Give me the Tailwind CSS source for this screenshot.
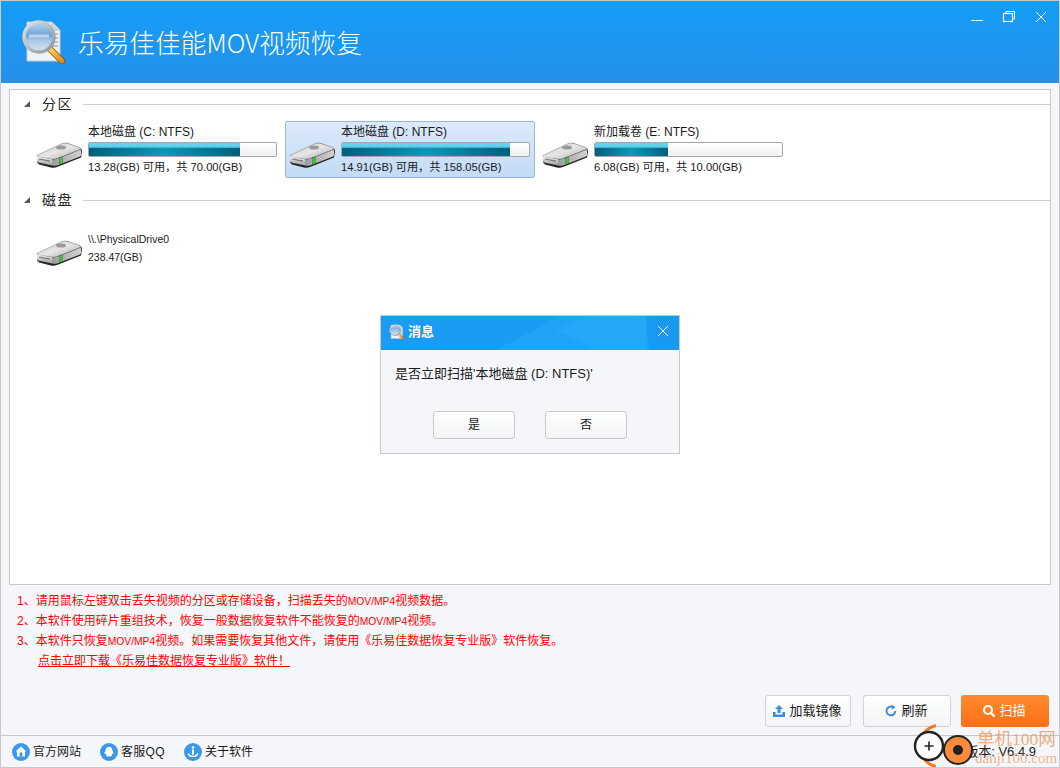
<!DOCTYPE html>
<html>
  <head>
    <meta charset="utf-8" />
    <title>乐易佳佳能MOV视频恢复</title>
    <script src="https://cdn.jsdelivr.net/npm/@tailwindcss/browser@4"></script>
  </head>

  <body>
    <!-- Shared icons -->
    <svg class="absolute h-0 w-0" xmlns="http://www.w3.org/2000/svg">
      <defs>
        <linearGradient id="hddTop" x1="0" y1="0" x2="1" y2="1">
          <stop offset="0" stop-color="#c9c9c9" />
          <stop offset="0.5" stop-color="#e6e6e6" />
          <stop offset="1" stop-color="#a8a8a8" />
        </linearGradient>
        <linearGradient id="hddFront" x1="0" y1="0" x2="0" y2="1">
          <stop offset="0" stop-color="#f4f4f4" />
          <stop offset="1" stop-color="#9a9a9a" />
        </linearGradient>
        <linearGradient id="hddSide" x1="0" y1="0" x2="1" y2="0">
          <stop offset="0" stop-color="#9c9c9c" />
          <stop offset="1" stop-color="#d2d2d2" />
        </linearGradient>
        <linearGradient id="glass" x1="0" y1="0" x2="0" y2="1">
          <stop offset="0" stop-color="#bcd9f5" />
          <stop offset="0.45" stop-color="#6f9fd6" />
          <stop offset="0.6" stop-color="#a9c6e4" />
          <stop offset="1" stop-color="#d5e6f7" />
        </linearGradient>
        <linearGradient id="handle" x1="0" y1="0" x2="1" y2="1">
          <stop offset="0" stop-color="#ffd76a" />
          <stop offset="1" stop-color="#e28a12" />
        </linearGradient>
        <linearGradient id="ring" x1="0" y1="0" x2="1" y2="1">
          <stop offset="0" stop-color="#e4e4e4" />
          <stop offset="1" stop-color="#8d9296" />
        </linearGradient>
      </defs>
      <symbol id="hdd" viewBox="0 0 46 26">
        <path d="M1 15 L27 2 Q29 1 32 1.5 L44 6 Q46 7 46 9 L45 15.5 L21 25 Q18 26 15 25.4 L3 22.4 Q1 21.6 1 19 Z" fill="#222" />
        <path d="M1 13.4 L26 1.6 Q29 0.4 32 1.4 L44 5.6 Q45.6 6.4 44 7.6 L21 16.6 Q18 17.6 15 17 L2 15 Q0.4 14.4 1 13.4 Z" fill="url(#hddTop)" stroke="#777" stroke-width="0.5" />
        <ellipse cx="25" cy="5.4" rx="5" ry="2" fill="#9a9a9a" />
        <path d="M1 14.4 L16 17.2 L16 23.6 L3 20.8 Q1 20.2 1 18.4 Z" fill="url(#hddFront)" />
        <path d="M16 17.2 Q19 17.8 22 16.6 L45 7.4 L45 13 Q45 14 44 14.4 L21 23.4 Q18 24.2 16 23.6 Z" fill="url(#hddSide)" />
        <rect x="23.6" y="15.6" width="2.6" height="6.4" fill="#3fc83f" stroke="#176b17" stroke-width="0.4" />
        <path d="M3 17 L14 19.2" stroke="#777" stroke-width="1.2" />
      </symbol>
      <symbol id="logo" viewBox="0 0 46 46">
        <path d="M6 3 H31 L39 11 V42 H6 Z" fill="#eef1f6" stroke="#c3cbd6" />
        <path d="M31 3 V11 H39" fill="#cfd6e0" stroke="#b3bcc9" />
        <path d="M30 15 H37 M30 19 H37 M30 23 H37 M30 27 H37" stroke="#7b8794" />
        <path d="M28 29 L41 42" stroke="#8a5a10" stroke-width="6.4" stroke-linecap="round" />
        <path d="M28 29 L41 42" stroke="url(#handle)" stroke-width="4.6" stroke-linecap="round" />
        <circle cx="18" cy="18" r="15" fill="url(#glass)" stroke="url(#ring)" stroke-width="3.4" />
        <path d="M8 17 H28" stroke="#dbe8f5" stroke-width="3" opacity="0.7" />
      </symbol>
    </svg>

    <div class="relative flex h-[768px] w-[1060px] flex-col overflow-hidden border border-[#c8c9cc] bg-[#f5f6f9] text-[12px] text-[#1a1a1a]"
      style='font-family: "Liberation Sans", "Noto Sans CJK SC", sans-serif;'>

      <!-- Title bar -->
      <header class="relative flex h-[82px] shrink-0 items-center bg-gradient-to-b from-[#109ef7] to-[#2590ea] pl-[20px] text-white">
        <svg class="mr-[11px] h-[46px] w-[46px]"><use href="#logo" /></svg>
        <h1 class="text-[25.7px] leading-none font-light" style='font-family: "Noto Sans CJK SC", sans-serif;'>乐易佳佳能MOV视频恢复</h1>
        <div class="absolute top-[9px] right-[11px] flex items-center gap-[18px]">
          <svg class="h-[14px] w-[14px]" viewBox="0 0 14 14" fill="none" stroke="#fff"><path d="M1 10.5H13" /></svg>
          <svg class="h-[14px] w-[14px]" viewBox="0 0 14 14" fill="none" stroke="#fff"><rect x="1.5" y="3.5" width="9" height="8" stroke-width="1.2" /><path d="M4 3V1.5H12.5V9H11" /></svg>
          <svg class="h-[14px] w-[14px]" viewBox="0 0 14 14" fill="none" stroke="#fff"><path d="M2 2L12 12M12 2L2 12" /></svg>
        </div>
      </header>

      <!-- Drive list -->
      <main class="mx-2 mt-[6px] h-[496px] shrink-0 border border-[#c8c9cc] bg-white">
        <div class="flex h-[28px] items-center pl-[14px]">
          <span class="h-0 w-0 border-b-[6px] border-l-[6px] border-b-[#555] border-l-transparent"></span>
          <span class="ml-[12px] w-[34px] text-[14px] tracking-[1.5px] text-[#222]">分区</span>
          <span class="ml-[7px] h-px flex-1 bg-[#cfcfcf]"></span>
        </div>
        <div class="mt-[3px] flex pl-[22px]">
          <div class="flex h-[57px] w-[253px] items-center pl-[4px]">
            <svg class="h-[26px] w-[46px] shrink-0 translate-y-[5px]"><use href="#hdd" /></svg>
            <div class="ml-[6px] w-[189px]">
              <p class="leading-[15px]">本地磁盘 (C: NTFS)</p>
              <div class="mt-[2px] h-[15px] overflow-hidden rounded-[2px] border border-[#a3a7a9] bg-gradient-to-b from-white to-[#f0f0f0]">
                <div class="h-full w-[80.5%] bg-gradient-to-b from-[#62d2ee] from-25% via-[#0a93b2] via-45% to-[#08a0bc]">
                  <div class="h-[9px] translate-y-[5px] bg-gradient-to-r from-[#00506e]/80 via-transparent via-50% to-[#00506e]/80"></div>
                </div>
              </div>
              <p class="mt-[3px] text-[11.2px] leading-[15px]">13.28(GB) 可用，共 70.00(GB)</p>
            </div>
          </div>
          <div class="flex h-[57px] w-[250px] items-center rounded-[2px] border border-[#98b6d6] bg-gradient-to-b from-[#dceafb] to-[#c3dbf6] pl-[3px]">
            <svg class="h-[26px] w-[46px] shrink-0 translate-y-[5px]"><use href="#hdd" /></svg>
            <div class="ml-[6px] w-[189px]">
              <p class="leading-[15px]">本地磁盘 (D: NTFS)</p>
              <div class="mt-[2px] h-[15px] overflow-hidden rounded-[2px] border border-[#a3a7a9] bg-gradient-to-b from-white to-[#f0f0f0]">
                <div class="h-full w-[90%] bg-gradient-to-b from-[#62d2ee] from-25% via-[#0a93b2] via-45% to-[#08a0bc]">
                  <div class="h-[9px] translate-y-[5px] bg-gradient-to-r from-[#00506e]/80 via-transparent via-50% to-[#00506e]/80"></div>
                </div>
              </div>
              <p class="mt-[3px] text-[11.2px] leading-[15px]">14.91(GB) 可用，共 158.05(GB)</p>
            </div>
          </div>
          <div class="ml-[3px] flex h-[57px] w-[253px] items-center pl-[4px]">
            <svg class="h-[26px] w-[46px] shrink-0 translate-y-[5px]"><use href="#hdd" /></svg>
            <div class="ml-[6px] w-[189px]">
              <p class="leading-[15px]">新加载卷 (E: NTFS)</p>
              <div class="mt-[2px] h-[15px] overflow-hidden rounded-[2px] border border-[#a3a7a9] bg-gradient-to-b from-white to-[#f0f0f0]">
                <div class="h-full w-[39.2%] bg-gradient-to-b from-[#62d2ee] from-25% via-[#0a93b2] via-45% to-[#08a0bc]">
                  <div class="h-[9px] translate-y-[5px] bg-gradient-to-r from-[#00506e]/80 via-transparent via-50% to-[#00506e]/80"></div>
                </div>
              </div>
              <p class="mt-[3px] text-[11.2px] leading-[15px]">6.08(GB) 可用，共 10.00(GB)</p>
            </div>
          </div>
        </div>

        <div class="mt-[8px] flex h-[28px] items-center pl-[14px]">
          <span class="h-0 w-0 border-b-[6px] border-l-[6px] border-b-[#555] border-l-transparent"></span>
          <span class="ml-[12px] w-[34px] text-[14px] tracking-[1.5px] text-[#222]">磁盘</span>
          <span class="ml-[7px] h-px flex-1 bg-[#cfcfcf]"></span>
        </div>
        <div class="mt-[9px] flex h-[50px] items-center pl-[26px]">
          <svg class="h-[26px] w-[46px] shrink-0 translate-y-[5px]"><use href="#hdd" /></svg>
          <div class="ml-[6px] text-[10.5px]">
            <p class="leading-[15px]">\\.\PhysicalDrive0</p>
            <p class="mt-[3px] leading-[15px]">238.47(GB)</p>
          </div>
        </div>
      </main>

      <!-- Notes -->
      <section class="mt-[6px] h-[104px] pl-4 text-[12px] leading-[20px] text-[#ff0000]">
        <p class="h-[20px]">1、请用鼠标左键双击丢失视频的分区或存储设备，扫描丢失的<span class="text-[10.3px]">MOV/MP4</span>视频数据。</p>
        <p class="h-[20px]">2、本软件使用碎片重组技术，恢复一般数据恢复软件不能恢复的<span class="text-[10.3px]">MOV/MP4</span>视频。</p>
        <p class="h-[20px]">3、本软件只恢复<span class="text-[10.3px]">MOV/MP4</span>视频。如果需要恢复其他文件，请使用《乐易佳数据恢复专业版》软件恢复。</p>
        <p class="h-[20px] pl-[21px] underline">点击立即下载《乐易佳数据恢复专业版》软件！</p>
      </section>

      <!-- Actions -->
      <div class="flex h-[32px] shrink-0 justify-end pr-[10px] text-[13px]">
        <button class="flex w-[86px] items-center justify-center gap-[3px] rounded-[3px] border border-[#cfd2d6] bg-gradient-to-b from-white to-[#f3f4f6] pr-[2px]">
          <svg class="h-[14px] w-[14px]" viewBox="0 0 14 14" fill="#3b8fdc"><path d="M7 1L11 5H8.6V9H5.4V5H3Z" /><path d="M1 8H3.6V10.4H10.4V8H13V13H1Z" /></svg>加载镜像
        </button>
        <button class="ml-3 flex w-[88px] items-center justify-center gap-[3px] rounded-[3px] border border-[#cfd2d6] bg-gradient-to-b from-white to-[#f3f4f6] pr-[2px]">
          <svg class="h-[14px] w-[14px]" viewBox="0 0 14 14" fill="none"><path d="M9.5 3.4A4.4 4.4 0 1 0 11.3 7" stroke="#3b8fdc" stroke-width="2" /><path d="M7.6 0.6L11.6 3.2L8 5.6Z" fill="#3b8fdc" /></svg>刷新
        </button>
        <button class="ml-[10px] flex w-[88px] items-center justify-center gap-[3px] rounded-[3px] bg-gradient-to-b from-[#ff8a2e] to-[#fb6e14] pr-[2px] text-white">
          <svg class="h-[14px] w-[14px]" viewBox="0 0 14 14" fill="none" stroke="#fff"><circle cx="6" cy="6" r="4" stroke-width="2" /><path d="M9 9L12.6 12.6" stroke-width="2.2" /></svg>扫描
        </button>
      </div>

      <!-- Status bar -->
      <footer class="mt-[8px] flex h-[32px] shrink-0 items-center border-t border-[#c8c9cc] pl-[11px]">
        <a class="flex items-center gap-[3px]">
          <svg class="h-[18px] w-[18px]" viewBox="0 0 18 18"><circle cx="9" cy="9" r="9" fill="#3b97e8" /><path d="M9 3.6L14.4 8.4H13V13.6H5V8.4H3.6Z" fill="#fff" /><rect x="7.6" y="9.4" width="2.8" height="4.2" fill="#3b97e8" /></svg>官方网站
        </a>
        <a class="ml-[19px] flex items-center gap-[3px]">
          <svg class="h-[18px] w-[18px]" viewBox="0 0 18 18"><circle cx="9" cy="9" r="9" fill="#3b97e8" /><path d="M9 3.8C11.4 3.8 12.4 5.6 12.4 7.4C13.4 9 14 10.6 13.2 11C12.8 11.2 12.4 10.8 12.2 10.6C11.8 12 12.4 12.6 11 13.4H7C5.6 12.6 6.2 12 5.8 10.6C5.6 10.8 5.2 11.2 4.8 11C4 10.6 4.6 9 5.6 7.4C5.6 5.6 6.6 3.8 9 3.8Z" fill="#fff" /></svg><span class="tracking-[0.3px]">客服QQ</span>
        </a>
        <a class="ml-[19px] flex items-center gap-[3px]">
          <svg class="h-[18px] w-[18px]" viewBox="0 0 18 18"><circle cx="9" cy="9" r="9" fill="#3b97e8" /><circle cx="9" cy="4.6" r="1.3" fill="#fff" /><rect x="8" y="6.6" width="2" height="5" fill="#fff" /><path d="M4.4 10.4C4.6 14.4 13.4 14.4 13.6 10.4" fill="none" stroke="#fff" stroke-width="1.4" /></svg>关于软件
        </a>
        <span class="mr-[23px] ml-auto text-[13px]">版本: V6.4.9</span>
      </footer>

      <!-- Message dialog -->
      <div class="absolute top-[314px] left-[379px] h-[139px] w-[300px] border border-[#c8c9cc] bg-[#f5f6f9]">
        <div class="relative flex h-[34px] items-center overflow-hidden bg-[#1b9cf3] pb-[2px] pl-2 text-[13px] font-bold text-white">
          <svg class="absolute inset-0 h-[34px] w-[298px]" viewBox="0 0 298 34">
            <path d="M115 34L165 8L175 0H265L268 34Z" fill="#1fa3f7" />
            <path d="M175 15L205 0H265V34H215Z" fill="#25a8f8" />
            <path d="M268 0H298V34H268Z" fill="#1a99f0" />
          </svg>
          <svg class="relative mr-[3px] h-[16px] w-[16px]"><use href="#logo" /></svg>
          <span class="relative">消息</span>
          <svg class="absolute top-[9px] right-[10px] h-[12px] w-[12px]" viewBox="0 0 12 12" fill="none" stroke="#fff"><path d="M1 1L11 11M11 1L1 11" /></svg>
        </div>
        <p class="mt-[15px] pl-[14px] text-[13px] leading-[18px]">是否立即扫描'本地磁盘 (D: NTFS)'</p>
        <div class="mt-[28px] flex gap-[30px] pl-[52px]">
          <button class="h-[28px] w-[82px] rounded-[3px] border border-[#c8c9cc] bg-gradient-to-b from-white to-[#f3f4f6] text-[12px]">是</button>
          <button class="h-[28px] w-[82px] rounded-[3px] border border-[#c8c9cc] bg-gradient-to-b from-white to-[#f3f4f6] text-[12px]">否</button>
        </div>
      </div>

      <!-- Watermark -->
      <div class="absolute top-[723px] left-[909px] h-[44px] w-[150px]">
        <svg class="absolute top-0 left-0 h-[44px] w-[70px]" viewBox="0 0 70 44" fill="none">
          <path d="M26 1.5A21 21 0 0 0 26 42.5" stroke="#f47b20" stroke-width="3" />
          <circle cx="19" cy="22" r="14" fill="#fff" stroke="#222" stroke-width="2.4" />
          <path d="M14.5 22H23.5M19 17.5V26.5" stroke="#222" stroke-width="1.6" />
          <circle cx="48" cy="26" r="14" fill="#ff8a3c" stroke="#222" stroke-width="2" />
          <circle cx="48" cy="26" r="5" fill="#222" />
        </svg>
        <span class="absolute top-[5px] left-[67px] text-[17.5px] leading-[20px] whitespace-nowrap text-[#ef8a4a]/70" style='font-family: "Liberation Serif", "Noto Sans CJK SC", serif;'>单机100网</span>
        <span class="absolute top-[25px] left-[65px] text-[15px] leading-[18px] whitespace-nowrap text-[#ef8a4a]/65" style='font-family: "Liberation Serif", serif;'>danji100.com</span>
      </div>
    </div>
  </body>
</html>
